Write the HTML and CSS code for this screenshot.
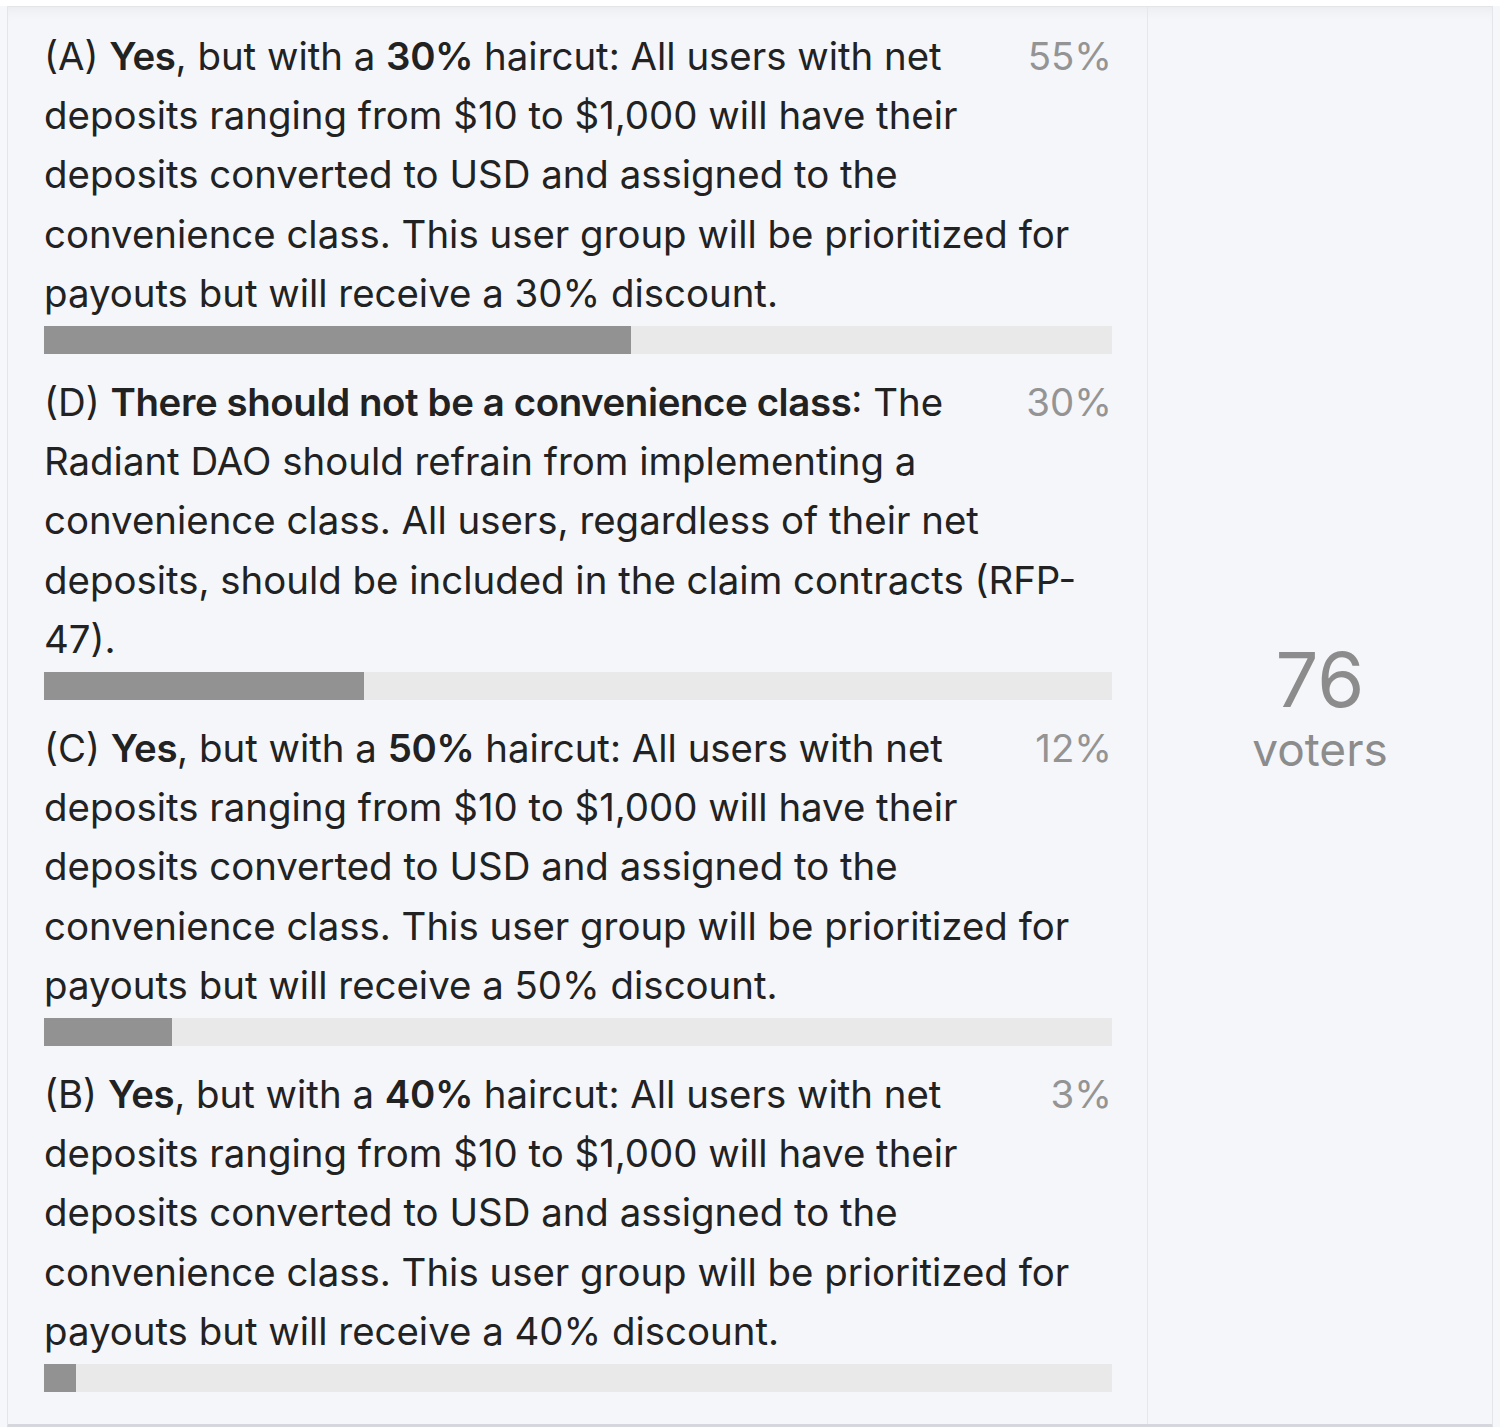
FILE: index.html
```html
<!DOCTYPE html>
<html lang="en">
<head>
<meta charset="utf-8">
<title>Poll results</title>
<link rel="stylesheet" href="styles.css">
</head>
<body>
<div class="page">
  <div class="poll">
    <div class="poll-container">
      <ul class="results">
        <li class="result">
          <div class="option">
            <p><span class="percentage">55%</span>(A) <strong>Yes</strong>, but with a <strong>30%</strong> haircut: All users with net deposits ranging from $10 to $1,000 will have their deposits converted to USD and assigned to the convenience class. This user group will be prioritized for payouts but will receive a 30% discount.</p>
          </div>
          <div class="bar-back"><div class="bar" style="width:55%"></div></div>
        </li>
        <li class="result">
          <div class="option">
            <p><span class="percentage">30%</span>(D) <strong>There should not be a convenience class</strong>: The Radiant DAO should refrain from implementing a convenience class. All users, regardless of their net deposits, should be included in the claim contracts (RFP-47).</p>
          </div>
          <div class="bar-back"><div class="bar" style="width:30%"></div></div>
        </li>
        <li class="result">
          <div class="option">
            <p><span class="percentage">12%</span>(C) <strong>Yes</strong>, but with a <strong>50%</strong> haircut: All users with net deposits ranging from $10 to $1,000 will have their deposits converted to USD and assigned to the convenience class. This user group will be prioritized for payouts but will receive a 50% discount.</p>
          </div>
          <div class="bar-back"><div class="bar" style="width:12%"></div></div>
        </li>
        <li class="result">
          <div class="option">
            <p><span class="percentage">3%</span>(B) <strong>Yes</strong>, but with a <strong>40%</strong> haircut: All users with net deposits ranging from $10 to $1,000 will have their deposits converted to USD and assigned to the convenience class. This user group will be prioritized for payouts but will receive a 40% discount.</p>
          </div>
          <div class="bar-back"><div class="bar" style="width:3%"></div></div>
        </li>
      </ul>
    </div>
    <div class="poll-info">
      <div class="info-number">76</div>
      <div class="info-label">voters</div>
    </div>
  </div>
</div>
</body>
</html>
```
FILE: styles.css
```css
html, body {
  margin: 0;
  padding: 0;
  background: #ffffff;
}

.page {
  padding: 6px 7px 0 7px;
  background: linear-gradient(#ffffff 0, #ffffff 6px, #f6f7fa 6px);
  font-family: Inter, "Liberation Sans", Arial, sans-serif;
  color: #222222;
}

.poll {
  display: grid;
  grid-template-columns: 1140px 1fr;
  background: #f5f6fa;
  border: 1px solid #e4e5e9;
  border-bottom: 4px solid #d6d7dc;
  box-shadow: inset 0 12px 16px -12px rgba(0, 0, 0, 0.07);
}

.poll-container {
  padding: 20px 35px 32px 36px;
  border-right: 1px solid #e6e7eb;
}

.results {
  list-style: none;
  margin: 0;
  padding: 0;
}

.result {
  margin-bottom: 19px;
}

.result:last-child {
  margin-bottom: 0;
}

.option p {
  margin: 0 0 3px 0;
  padding-right: 18px;
  font-size: 38.4px;
  line-height: 59.2px;
}

.option strong {
  font-weight: 600;
  letter-spacing: -0.01em;
}

.percentage {
  float: right;
  margin-left: 20px;
  margin-right: -18px;
  color: #949494;
}

.bar-back {
  height: 28px;
  background: #e9e9e9;
}

.bar {
  height: 100%;
  background: #929292;
}

.poll-info {
  display: flex;
  flex-direction: column;
  align-items: center;
  justify-content: center;
  padding-bottom: 16px;
  color: #8c8c8c;
  text-align: center;
}

.info-number {
  font-size: 76px;
  line-height: 1.1;
}

.info-label {
  font-size: 46px;
  line-height: 1.2;
}
```
